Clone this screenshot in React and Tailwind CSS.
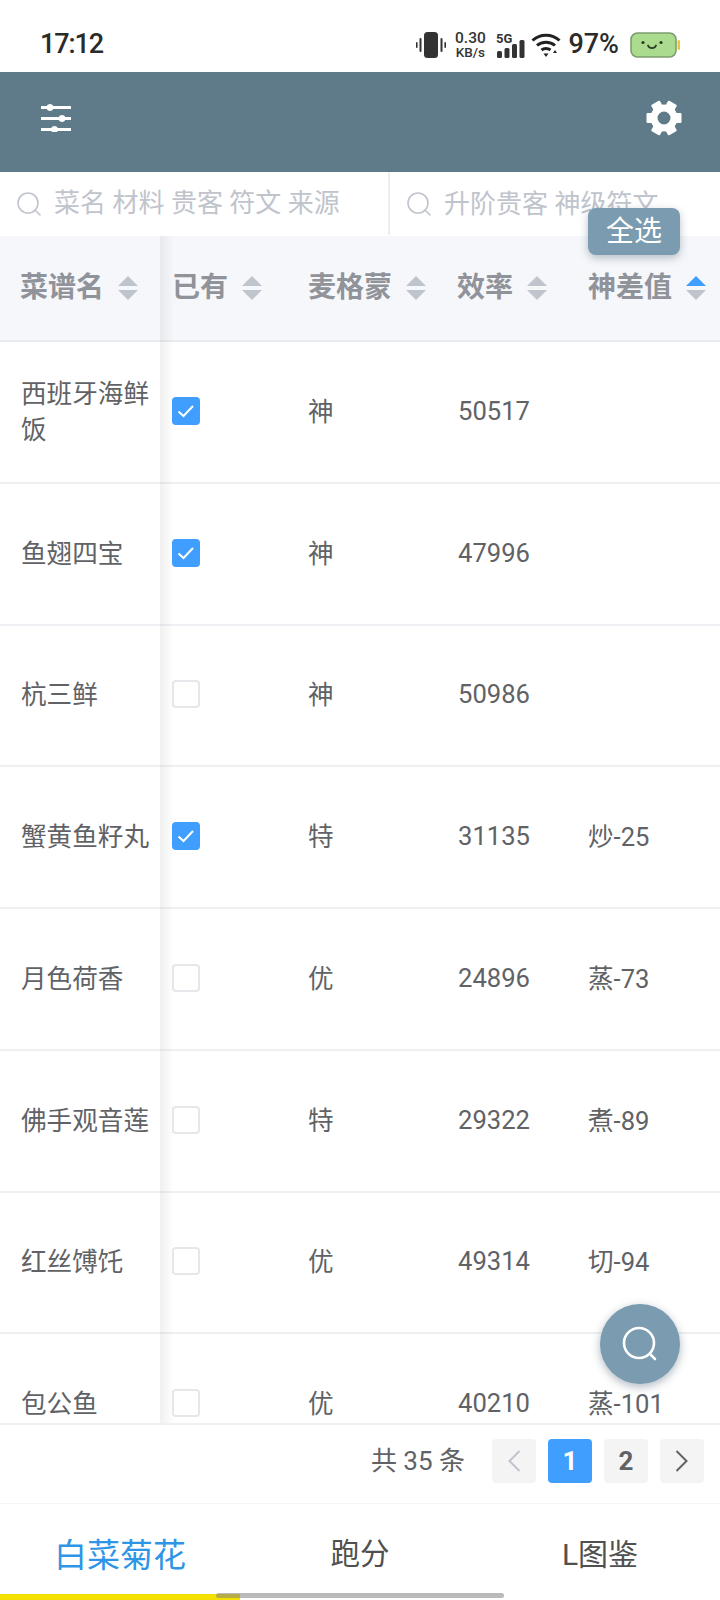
const FONT = "[font-family:Roboto,'Noto_Sans_CJK_SC',sans-serif]";

const rows = [
  ["西班牙海鲜饭", true, "神", "50517", ""],
  ["鱼翅四宝", true, "神", "47996", ""],
  ["杭三鲜", false, "神", "50986", ""],
  ["蟹黄鱼籽丸", true, "特", "31135", "炒-25"],
  ["月色荷香", false, "优", "24896", "蒸-73"],
  ["佛手观音莲", false, "特", "29322", "煮-89"],
  ["红丝馎饦", false, "优", "49314", "切-94"],
  ["包公鱼", false, "优", "40210", "蒸-101"],
];

function SearchIcon({ size = 24, color = "#c0c4cc", sw = 1.6 }) {
  return (
    <svg width={size} height={size} viewBox="0 0 24 24" fill="none" stroke={color} strokeWidth={sw} strokeLinecap="round">
      <circle cx="11" cy="11" r="10" />
      <path d="M18.5 18.5L23 23" />
    </svg>
  );
}

function Caret({ active }) {
  return (
    <svg width="20" height="26" viewBox="0 0 20 26" className="shrink-0">
      <path d="M10 1L20 11H0Z" fill={active ? "#409eff" : "#c0c4cc"} />
      <path d="M10 25L0 15H20Z" fill="#c0c4cc" />
    </svg>
  );
}

function Check({ on }) {
  if (on) {
    return (
      <div className="w-[28px] h-[28px] rounded-[4px] bg-[#409eff] flex items-center justify-center">
        <svg width="20" height="16" viewBox="0 0 20 16" fill="none" stroke="#fff" strokeWidth="2">
          <path d="M2.5 8.5L7.5 13L17 3" />
        </svg>
      </div>
    );
  }
  return <div className="w-[28px] h-[28px] rounded-[4px] bg-white border-2 border-[#e6e7ea]" />;
}

function StatusBar() {
  return (
    <div className={`h-[72px] bg-white shrink-0 flex items-center pl-[40px] pr-[40px] justify-between text-[#2b2b2b] ${FONT}`}>
      <span className="text-[27px] font-medium leading-none mt-[16px] tracking-[-1.1px]">17:12</span>
      <div className="flex items-center mt-[17px] h-[26px]">
        <svg width="30" height="26" viewBox="0 0 30 26" fill="#333">
          <rect x="8" y="0" width="14" height="26" rx="3.5" />
          <rect x="3.5" y="6" width="2" height="14" rx="1" />
          <rect x="24.5" y="6" width="2" height="14" rx="1" />
          <rect x="0" y="10" width="1.6" height="6" rx="0.8" />
          <rect x="28.4" y="10" width="1.6" height="6" rx="0.8" />
        </svg>
        <div className="ml-[8px] w-[32px] flex flex-col items-center font-medium text-[15.5px] leading-[14px] text-[#333]">
          <span>0.30</span>
          <span className="text-[13.5px]">KB/s</span>
        </div>
        <svg width="30" height="26" viewBox="0 0 30 26" fill="#333" className="ml-[10px]">
          <text x="0" y="11" fontSize="13" fontWeight="700" fontFamily="Roboto">5G</text>
          <rect x="1" y="19" width="5" height="7" rx="1.5" />
          <rect x="8.5" y="16" width="5" height="10" rx="1.5" />
          <rect x="16" y="12" width="5" height="14" rx="1.5" />
          <rect x="23.5" y="8" width="5" height="18" rx="1.5" />
        </svg>
        <svg width="30" height="26" viewBox="0 0 30 26" fill="none" stroke="#222" strokeWidth="3" className="ml-[5px]">
          <path d="M1.5 8.5C9 1.5 21 1.5 28.5 8.5" />
          <path d="M6 13.5C11 9 19 9 24 13.5" />
          <path d="M10.5 18C13 16 17 16 19.5 18" />
          <path d="M12.5 21.5H17.5L15 25Z" fill="#222" stroke="none" />
          <path d="M22 21L26 21L24 18Z" fill="#222" stroke="none" />
        </svg>
        <span className="ml-[7px] text-[27px] font-medium leading-none text-[#2b2b2b]">97%</span>
        <svg width="50" height="26" viewBox="0 0 50 26" className="ml-[11px]">
          <rect x="1" y="1" width="45" height="24" rx="6.5" fill="#aadb8e" stroke="#7d9e6f" strokeWidth="1.6" />
          <rect x="47.5" y="8" width="2.5" height="10" rx="1.2" fill="#e8c93c" />
          <circle cx="13" cy="10.5" r="1.6" fill="#2d3b22" />
          <circle cx="31" cy="10.5" r="1.6" fill="#2d3b22" />
          <path d="M18 13.5C19.5 17 24.5 17 26 13.5" fill="none" stroke="#2d3b22" strokeWidth="1.8" strokeLinecap="round" />
        </svg>
      </div>
    </div>
  );
}

function TopBar() {
  const teeth = [0, 60, 120, 180, 240, 300];
  return (
    <div className="h-[100px] bg-[#5f7b8a] shrink-0 flex items-center justify-between pl-[41px] pr-[38px]">
      <svg width="30" height="28" viewBox="0 0 30 28" fill="#fff" stroke="#fff" className="-mt-[9px]">
        <path d="M0 3.5H30M0 14.5H30M0 25.5H30" strokeWidth="3" />
        <circle cx="9" cy="3.5" r="3.2" strokeWidth="0.5" />
        <circle cx="21" cy="14.5" r="3.2" strokeWidth="0.5" />
        <circle cx="13.5" cy="25.5" r="3.2" strokeWidth="0.5" />
      </svg>
      <svg width="36" height="36" viewBox="0 0 36 36" className="-mt-[8px]">
        {teeth.map((a) => (
          <rect key={a} x="13" y="0.5" width="10" height="8" rx="1" fill="#fff" transform={`rotate(${a + 90} 18 18)`} />
        ))}
        <circle cx="18" cy="18" r="10" fill="none" stroke="#fff" strokeWidth="7" />
      </svg>
    </div>
  );
}

function SearchBar() {
  return (
    <div className="h-[64px] bg-white shrink-0 flex text-[26px] text-[#c0c4cc]">
      <div className="w-[390px] flex items-center pl-[17px] border-r-2 border-[#eceef1] mb-[1px] shrink-0">
        <SearchIcon />
        <span className="ml-[13px] whitespace-nowrap">菜名 材料 贵客 符文 来源</span>
      </div>
      <div className="flex-1 flex items-center pl-[17px]">
        <SearchIcon />
        <span className="ml-[13px] whitespace-nowrap">升阶贵客 神级符文</span>
      </div>
    </div>
  );
}

const COLS = "grid grid-cols-[160px_135px_149px_131px_145px]";

function HeadCell({ label, active, first, pad }) {
  return (
    <div className={`flex items-center gap-[14px] whitespace-nowrap ${pad} ${first ? "bg-[#f5f7fa]" : ""}`}>
      <span>{label}</span>
      <Caret active={active} />
    </div>
  );
}

function Table() {
  return (
    <div className="relative flex-1 min-h-0 flex flex-col bg-white overflow-hidden">
      <div className={`${COLS} h-[106px] shrink-0 bg-[#f5f7fa] border-b-2 border-[#e9ebf0] text-[28px] font-bold text-[#909399]`}>
        <HeadCell label="菜谱名" first pad="pl-[20px]" />
        <HeadCell label="已有" pad="pl-[12px]" />
        <HeadCell label="麦格蒙" pad="pl-[13px]" />
        <HeadCell label="效率" pad="pl-[13px]" />
        <HeadCell label="神差值" active pad="pl-[13px]" />
      </div>
      {rows.map((r) => (
        <div key={r[0]} className={`${COLS} h-[141.75px] shrink-0 border-b-2 border-[#eef0f3] text-[25.6px] leading-[36px] text-[#606266]`}>
          <div className="flex items-center pl-[21px] pr-[8px] bg-white">
            {r[0]}
          </div>
          <div className="flex items-center pl-[12px] pb-[2px]"><Check on={r[1]} /></div>
          <div className="flex items-center pl-[13px]">{r[2]}</div>
          <div className="flex items-center pl-[14px] pb-[2px]">{r[3]}</div>
          <div className="flex items-center pl-[13px]">{r[4]}</div>
        </div>
      ))}
      <div className="absolute left-[160px] top-0 bottom-0 w-[14px] bg-gradient-to-r from-black/[0.06] to-transparent" />
    </div>
  );
}

function PageBtn({ children, active }) {
  return (
    <div className={`w-[44px] h-[44px] rounded-[4px] flex items-center justify-center text-[26px] font-bold ${active ? "bg-[#409eff] text-white" : "bg-[#f4f4f5] text-[#606266]"}`}>
      {children}
    </div>
  );
}

function Pagination() {
  return (
    <div className="h-[80px] shrink-0 bg-white border-t-2 border-[#eef0f3] flex items-start justify-end pt-[14px] pr-[16px] gap-[12px]">
      <span className="text-[26px] leading-[44px] text-[#606266] mr-[15px] whitespace-nowrap">共 35 条</span>
      <PageBtn>
        <svg width="14" height="24" viewBox="0 0 14 24" fill="none" stroke="#c0c4cc" strokeWidth="2"><path d="M12.5 2L2.5 12L12.5 22" /></svg>
      </PageBtn>
      <PageBtn active>1</PageBtn>
      <PageBtn>2</PageBtn>
      <PageBtn>
        <svg width="14" height="24" viewBox="0 0 14 24" fill="none" stroke="#606266" strokeWidth="2"><path d="M1.5 2L11.5 12L1.5 22" /></svg>
      </PageBtn>
    </div>
  );
}

function Tabs() {
  return (
    <div className="h-[97px] shrink-0 bg-white border-t border-[#f6f6f6] flex pt-[6px] items-center text-[#505050]">
      <div className="w-[240px] text-center text-[33px] leading-none text-[#2f95e6]">白菜菊花</div>
      <div className="w-[240px] text-center text-[29.5px] leading-none">跑分</div>
      <div className="w-[240px] text-center text-[30px] leading-none">L图鉴</div>
    </div>
  );
}

export default function App() {
  return (
    <div className={`relative w-[720px] h-[1600px] overflow-hidden flex flex-col bg-white ${FONT}`}>
      <StatusBar />
      <TopBar />
      <SearchBar />
      <Table />
      <Pagination />
      <Tabs />

      <div className="absolute left-[588px] top-[208px] z-20 w-[92px] h-[47px] rounded-[8px] bg-[#7a9bb0] shadow-[0_3px_8px_rgba(60,80,100,0.35)] flex items-center justify-center text-white text-[28px] leading-none">
        全选
      </div>
      <div className="absolute left-[600px] top-[1304px] z-20 w-[80px] h-[80px] rounded-full bg-[#7a9bb0] shadow-[0_3px_10px_rgba(60,80,100,0.4)] flex items-center justify-center">
        <svg width="36" height="36" viewBox="0 0 36 36" fill="none" stroke="#fff" strokeWidth="2.6" strokeLinecap="round">
          <circle cx="17" cy="17" r="15" />
          <path d="M28 28L33 33" />
        </svg>
      </div>
      <div className="absolute left-0 bottom-0 w-[240px] h-[6px] bg-[#f3e000]" />
      <div className="absolute left-[216px] top-[1593px] w-[288px] h-[5px] rounded-full bg-[rgba(130,130,130,0.55)]" />
    </div>
  );
}
